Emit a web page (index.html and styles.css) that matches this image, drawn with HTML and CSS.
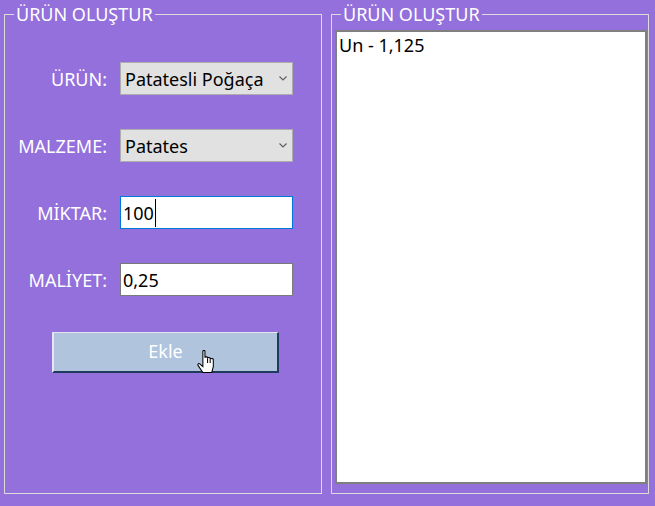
FILE: index.html
```html
<!DOCTYPE html>
<html lang="tr">
<head>
<meta charset="utf-8">
<title>Ürün Oluştur</title>
<link rel="stylesheet" href="styles.css">
</head>
<body>
<div class="window">
  <fieldset class="group">
    <legend class="group-title">ÜRÜN OLUŞTUR</legend>
    <div class="form">
      <label class="lbl">ÜRÜN:</label>
      <div class="combo"><span class="combo-text">Patatesli Poğaça</span><svg class="chev" width="8" height="5" viewBox="0 0 8 5"><path d="M0.5 0.5 L4 4 L7.5 0.5" fill="none" stroke="#606060" stroke-width="1.2"/></svg></div>
      <label class="lbl">MALZEME:</label>
      <div class="combo"><span class="combo-text">Patates</span><svg class="chev" width="8" height="5" viewBox="0 0 8 5"><path d="M0.5 0.5 L4 4 L7.5 0.5" fill="none" stroke="#606060" stroke-width="1.2"/></svg></div>
      <label class="lbl">MİKTAR:</label>
      <div class="textbox focused"><span>100</span><span class="caret"></span></div>
      <label class="lbl">MALİYET:</label>
      <div class="textbox"><span>0,25</span></div>
    </div>
    <div class="btn-wrap">
      <button class="btn">Ekle</button>
      <svg class="cursor" width="18" height="24" viewBox="0 0 17 23"><path d="M5.5 1.5 C5.5 0 7.5 0 7.5 1.5 L7.5 7.5 C7.5 6.3 10 6.3 10 7.5 L10 8 C10 6.8 12.5 6.8 12.5 8 L12.5 9 C12.5 7.8 15.5 7.8 15.5 9 L15.5 16 L14 21.5 L5.5 21.5 L1 15 C0.2 14 1.3 12.3 2.5 13.3 L5.5 16 Z" fill="#fff" stroke="#000" stroke-width="1"/><path d="M10 8 V12.5 M12.5 9 V12.5" fill="none" stroke="#000" stroke-width="1"/></svg>
    </div>
  </fieldset>
  <fieldset class="group">
    <legend class="group-title">ÜRÜN OLUŞTUR</legend>
    <div class="listbox">
      <div class="list-item">Un - 1,125</div>
    </div>
  </fieldset>
</div>
</body>
</html>
```
FILE: styles.css
```css
* { box-sizing: border-box; }
html, body {
  margin: 0;
  width: 655px;
  height: 506px;
  background: #9370db;
  overflow: hidden;
}
body {
  font-family: "Noto Sans", "Open Sans", sans-serif;
  font-size: 18px;
}
.window {
  display: flex;
  gap: 9px;
  padding: 3px 0 0 4px;
}
.group {
  width: 318px;
  height: 491px;
  margin: 0;
  padding: 0 0 0 9px;
  min-width: 0;
  border: 1px solid #dcdcdc;
}
.group-title {
  color: #fff;
  font-size: 18px;
  line-height: 23px;
  padding: 0 2px;
}
.form {
  display: grid;
  grid-template-columns: 93px 173px;
  grid-auto-rows: 33px;
  column-gap: 13px;
  row-gap: 34px;
  padding-top: 36px;
}
.lbl {
  color: #fff;
  text-align: right;
  align-self: center;
  line-height: 22px;
  white-space: nowrap;
}
.combo {
  display: flex;
  align-items: center;
  justify-content: space-between;
  background: #e1e1e1;
  border: 1px solid #adadad;
  padding: 0 5px 0 4px;
  color: #000;
  white-space: nowrap;
}
.chev { display: block; flex: none; }
.textbox {
  display: flex;
  align-items: center;
  background: #fff;
  border: 1px solid #7a7a7a;
  padding: 0 2px 0 2px;
  color: #000;
}
.textbox.focused { border-color: #0078d7; }
.caret {
  display: inline-block;
  width: 1px;
  height: 28px;
  background: #000;
  margin-left: 1px;
}
.btn-wrap {
  position: relative;
  margin: 36px 0 0 38px;
  width: 227px;
  height: 41px;
}
.btn {
  display: block;
  width: 227px;
  height: 41px;
  margin: 0;
  padding: 0 0 2px 0;
  background: #b0c4de;
  color: #fff;
  font-family: inherit;
  font-size: 18px;
  border-style: solid;
  border-width: 1px 2px 2px 2px;
  border-color: #e4e6f2 #1e3a5c #1e3a5c #e4e6f2;
}
.cursor {
  position: absolute;
  left: 145px;
  top: 18px;
}
.listbox {
  margin: 4px 0 0 -6px;
  width: 312px;
  height: 454px;
  background: #fff;
  border: 2px solid #7f7f7f;
  padding: 2px 2px;
}
.list-item {
  color: #000;
  line-height: 22px;
}
```
